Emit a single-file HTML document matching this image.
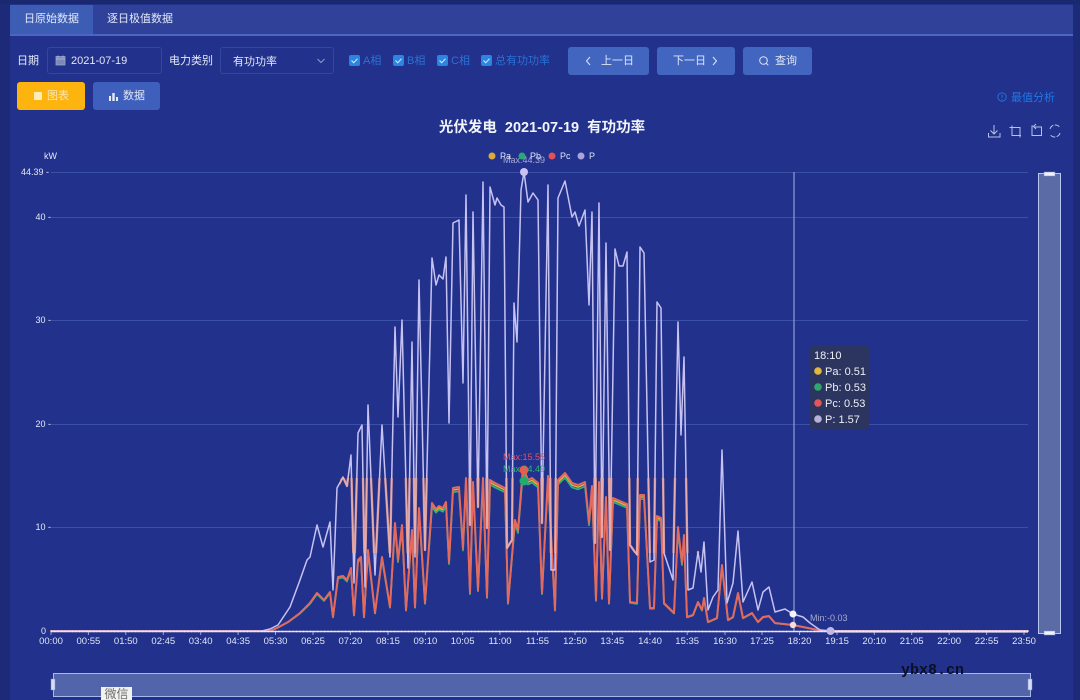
<!DOCTYPE html>
<html lang="zh">
<head>
<meta charset="utf-8">
<title>光伏发电</title>
<style>
html,body{margin:0;padding:0;background:#22318b}
body{width:1080px;height:700px;overflow:hidden;position:relative;font-family:"Liberation Sans","Noto Sans CJK SC",sans-serif;color:#e6ebf8;font-size:11px}
#w{position:absolute;left:0;top:0;width:1080px;height:700px;overflow:hidden;background:#22318b;filter:blur(.35px)}
.abs{position:absolute}
.t{position:absolute;white-space:nowrap;line-height:14px}
.btn{position:absolute;border-radius:3px;background:#4266bf;box-sizing:border-box;height:28px;top:47px;line-height:29px;text-align:center;color:#dfe6f6;font-size:11px}
.box{position:absolute;top:47px;height:27px;box-sizing:border-box;border:1px solid #34479f;border-radius:3px}
.cb{position:absolute;top:55px;width:11px;height:11px;background:#2a86e2;border-radius:2px}
.cb svg{display:block}
.cl{position:absolute;top:54px;color:#2b72d6;font-size:11px;line-height:14px;white-space:nowrap}
</style>
</head>
<body>
<div id="w">
<div class="abs" style="left:0;top:0;width:10px;height:700px;background:#1c2a78"></div>
<div class="abs" style="left:1073px;top:0;width:7px;height:700px;background:#1c2a78"></div>
<div class="abs" style="left:0;top:0;width:1080px;height:4px;background:#1a2870"></div>

<div class="abs" style="left:10px;top:5px;width:1063px;height:29px;background:#2f4198"></div>
<div class="abs" style="left:10px;top:5px;width:83px;height:29px;background:#3d5db5"></div>
<div class="abs" style="left:10px;top:34px;width:1063px;height:2px;background:#4a65c2"></div>
<div class="t" style="left:24px;top:12px;color:#e2e8f8">日原始数据</div>
<div class="t" style="left:107px;top:12px;color:#e2e8f8">逐日极值数据</div>

<div class="t" style="left:17px;top:54px">日期</div>
<div class="box" style="left:47px;width:115px"></div>
<svg class="abs" style="left:55px;top:55px" width="11" height="11" viewBox="0 0 11 11"><rect x="1" y="1.500" width="9" height="8.500" fill="#7c88b8" stroke="#98a4cc" stroke-width=".8"/><path d="M1 4h9M3 .5v2M8 .5v2" stroke="#b4bedc" stroke-width=".8"/></svg>
<div class="t" style="left:71px;top:54px;color:#e2e8f8">2021-07-19</div>
<div class="t" style="left:169px;top:54px">电力类别</div>
<div class="box" style="left:220px;width:114px"></div>
<div class="t" style="left:233px;top:55px;color:#e2e8f8">有功功率</div>
<svg class="abs" style="left:316px;top:57px" width="10" height="8" viewBox="0 0 10 8"><path d="M1.500 2l3.500 3.500L8.500 2" fill="none" stroke="#8e9ccc" stroke-width="1"/></svg>

<div class="cb" style="left:349px"><svg width="11" height="11"><path d="M2.500 5.500l2.200 2.200 3.800-4" fill="none" stroke="#cfe4fb" stroke-width="1.100"/></svg></div><div class="cl" style="left:363px">A相</div>
<div class="cb" style="left:393px"><svg width="11" height="11"><path d="M2.500 5.500l2.200 2.200 3.800-4" fill="none" stroke="#cfe4fb" stroke-width="1.100"/></svg></div><div class="cl" style="left:407px">B相</div>
<div class="cb" style="left:437px"><svg width="11" height="11"><path d="M2.500 5.500l2.200 2.200 3.800-4" fill="none" stroke="#cfe4fb" stroke-width="1.100"/></svg></div><div class="cl" style="left:451px">C相</div>
<div class="cb" style="left:481px"><svg width="11" height="11"><path d="M2.500 5.500l2.200 2.200 3.800-4" fill="none" stroke="#cfe4fb" stroke-width="1.100"/></svg></div><div class="cl" style="left:495px">总有功功率</div>

<div class="btn" style="left:568px;width:81px">
<svg style="position:absolute;left:17px;top:9px" width="7" height="10" viewBox="0 0 7 10"><path d="M5 1L1.500 5 5 9" fill="none" stroke="#dfe6f6" stroke-width="1"/></svg><span style="position:absolute;left:33px;top:0">上一日</span></div>
<div class="btn" style="left:657px;width:78px"><span style="position:absolute;left:16px;top:0">下一日</span>
<svg style="position:absolute;left:54px;top:9px" width="7" height="10" viewBox="0 0 7 10"><path d="M2 1l3.500 4L2 9" fill="none" stroke="#dfe6f6" stroke-width="1"/></svg></div>
<div class="btn" style="left:743px;width:69px">
<svg style="position:absolute;left:15px;top:8px" width="12" height="12" viewBox="0 0 12 12"><circle cx="5.500" cy="5.500" r="3.800" fill="none" stroke="#dfe6f6" stroke-width="1"/><path d="M8.300 8.300l2 2" stroke="#dfe6f6" stroke-width="1"/></svg><span style="position:absolute;left:32px;top:0">查询</span></div>

<div class="btn" style="left:17px;top:82px;width:68px;background:#fdb40f;color:#fbe6a8"><span class="abs" style="left:17px;top:10px;width:8px;height:8px;background:#fdeeb8;border-radius:1px"></span><span style="position:absolute;left:30px;top:0">图表</span></div>
<div class="btn" style="left:93px;top:82px;width:67px;background:#3f5fbc">
<svg style="position:absolute;left:16px;top:10px" width="9" height="9" viewBox="0 0 9 9"><path d="M0 4h2v5H0zM3.300 1h2.400v8H3.300zM7 5h2v4H7z" fill="#e6ebf8"/></svg><span style="position:absolute;left:30px;top:0">数据</span></div>

<svg class="abs" style="left:997px;top:92px" width="10" height="10" viewBox="0 0 10 10"><circle cx="5" cy="5" r="4.200" fill="none" stroke="#1f78e6" stroke-width=".9"/><path d="M5 2.500v3.500M5 7v1" stroke="#1f78e6" stroke-width=".9"/></svg>
<div class="t" style="left:1011px;top:91px;color:#1f78e6">最值分析</div>

<div class="t" style="left:0;width:1084px;top:120px;text-align:center;font-size:14.500px;font-weight:bold;color:#f2f4fb;line-height:16px;white-space:pre">光伏发电  2021-07-19  有功功率</div>

<svg class="abs" style="left:0;top:0" width="1080" height="700" viewBox="0 0 1080 700">
  <defs>
    <polyline id="rl" fill="none" stroke-linejoin="round" stroke-linecap="round" points="51,631 270,631 277,628 288,622 300,613 310,603 317,593 324,600 330,592 333,617 338,577 343,576 347,580 351,568 354,615 358,560 361,557 364,617 368,550 375,613 382,557 390,607 395,523 398,560 402,525 406,610 412,530 415,607 419,508 425,603 432,503 436,509 439,506 443,508 446,502 449,562 453,488 459,487 463,548 466,478 470,593 473,482 478,590 483,478 487,597 490,480 495,483 505,488 508,603 515,520 518,530 523,467 528,480 532,478 538,483 542,593 548,476 555,610 558,480 565,473 572,483 578,485 585,482 589,522 592,486 596,600 599,482 602,598 606,497 609,603 613,498 620,501 627,504 630,602 637,603 640,495 644,495 650,608 654,608 657,516 661,518 664,603 674,613 678,527 682,563 684,535 687,617 693,615 698,602 702,610 704,598 708,622 717,618 722,565 728,620 733,617 738,593 743,618 752,613 758,622 763,617 769,616 775,623 793,625 803,627 818,630 830,631 1028,631"/>
    <polyline id="pl" fill="none" stroke-linejoin="round" stroke-linecap="round" points="51,631 262,631 270,629 278,625 290,607 300,580 307,560 310,557 317,525 323,547 330,522 333,590 337,488 343,477 347,486 351,455 354,583 358,433 362,425 365,587 368,405 375,575 382,425 390,557 395,327 398,417 402,320 408,568 412,342 415,557 419,280 425,550 432,258 436,285 439,275 443,279 446,257 449,423 453,223 459,220 463,383 466,195 470,525 473,212 478,507 483,182 487,528 490,187 495,205 497,198 501,205 504,207 507,548 512,540 514,303 517,342 521,190 524,172 528,202 533,193 538,200 542,523 548,185 551,570 555,570 558,198 565,181 572,217 575,212 579,226 585,210 589,305 592,212 595,543 599,203 602,537 606,243 610,550 615,249 619,266 623,266 627,252 630,545 637,555 640,247 644,253 650,562 654,560 657,302 661,308 664,553 673,580 678,322 681,435 684,357 688,590 693,588 698,552 701,572 704,542 708,610 713,597 718,590 722,450 727,603 733,583 738,531 743,602 752,582 758,610 763,592 769,587 775,612 785,609 793,614 803,617 810,623 820,630 830,631 1028,631"/>
    <clipPath id="lo"><rect x="340" y="478" width="360" height="75"/></clipPath>
  </defs>
  <!-- toolbox -->
  <g fill="none" stroke="#b7c2e4" stroke-width="1">
    <path d="M994 125v9M990.500 130.500l3.500 3.500 3.500-3.500M988.500 133v4h11.500v-4"/>
    <path d="M1012 125.500v10h9M1009.500 127.500h10.500v10"/>
    <path d="M1033 126h-1v9.500h9.500v-8.500h-7M1036 124l-2.500 2.500 2.500 2.500"/>
    <path d="M1050 129a5.500 5.500 0 0 1 9.500-2M1060 133a5.500 5.500 0 0 1-9.500 2" stroke-dasharray="5 1.500"/>
  </g>

  <!-- grid -->
  <g stroke="#3a4fa6" stroke-width="1">
    <path d="M51 172.500H1028M51 217.500H1028M51 320.500H1028M51 424.500H1028M51 527.500H1028"/>
  </g>
  <path d="M51 631.500H1028" stroke="#6f84d0" stroke-width="1"/>

  <!-- y axis -->
  <g font-family="Liberation Sans, sans-serif" font-size="9" fill="#e4e9f8">
    <text x="44" y="159">kW</text>
    <text x="49" y="175" text-anchor="end">44.39 -</text>
    <text x="51" y="220" text-anchor="end">40 -</text>
    <text x="51" y="323" text-anchor="end">30 -</text>
    <text x="51" y="427" text-anchor="end">20 -</text>
    <text x="51" y="530" text-anchor="end">10 -</text>
    <text x="46" y="634" text-anchor="end">0</text>
  </g>

  <!-- x axis labels -->
  <g font-family="Liberation Sans, sans-serif" font-size="9.500" fill="#dfe5f6" text-anchor="middle">
    <text x="51" y="644">00:00</text><text x="88.400" y="644">00:55</text><text x="125.800" y="644">01:50</text><text x="163.300" y="644">02:45</text><text x="200.700" y="644">03:40</text><text x="238.100" y="644">04:35</text><text x="275.500" y="644">05:30</text><text x="313" y="644">06:25</text><text x="350.400" y="644">07:20</text><text x="388" y="644">08:15</text><text x="425.400" y="644">09:10</text><text x="462.600" y="644">10:05</text><text x="500" y="644">11:00</text><text x="537.500" y="644">11:55</text><text x="575" y="644">12:50</text><text x="612.300" y="644">13:45</text><text x="650" y="644">14:40</text><text x="687.200" y="644">15:35</text><text x="725" y="644">16:30</text><text x="762" y="644">17:25</text><text x="799.500" y="644">18:20</text><text x="837" y="644">19:15</text><text x="874.300" y="644">20:10</text><text x="911.700" y="644">21:05</text><text x="949.200" y="644">22:00</text><text x="986.600" y="644">22:55</text><text x="1024" y="644">23:50</text>
  </g>
  <path d="M51 631v4M88.400 631v4M125.800 631v4M163.300 631v4M200.700 631v4M238.100 631v4M275.500 631v4M313 631v4M350.400 631v4M388 631v4M425.400 631v4M462.600 631v4M500 631v4M537.500 631v4M575 631v4M612.300 631v4M650 631v4M687.200 631v4M725 631v4M762 631v4M799.500 631v4M837 631v4M874.300 631v4M911.700 631v4M949.200 631v4M986.600 631v4M1024 631v4" stroke="#c8d2f0" stroke-width="1" opacity=".7"/>

  <!-- cursor -->
  <path d="M794 172V631" stroke="#8e9fd8" stroke-width="1.200"/>

  <!-- series -->
  <use href="#rl" stroke="#e2b23c" stroke-width="1.500" transform="translate(0,631) scale(1,.985) translate(0,-631)"/>
  <use href="#rl" stroke="#2fb27a" stroke-width="1.800" transform="translate(0,631) scale(1,.97) translate(0,-631)"/>
  <use href="#rl" stroke="#e4695e" stroke-width="2"/>
  <use href="#pl" stroke="#c6c2f3" stroke-width="1.500"/>
  <use href="#pl" stroke="#f2a596" stroke-width="2.400" opacity=".75" clip-path="url(#lo)"/>
  <path d="M51 631.500H830" stroke="#e6dcf0" stroke-width="1.600"/>
  <path d="M830 631.500H1028" stroke="#e6dcf0" stroke-width="2.200"/>
  <path d="M51 631.500H1028" stroke="#ffffff" stroke-width="1.500" stroke-dasharray="1 2.500" opacity=".6"/>

  <!-- markers -->
  <circle cx="524" cy="172" r="4" fill="#c9c3f2"/>
  <circle cx="524" cy="470" r="4.500" fill="#ee5a4c"/>
  <circle cx="524" cy="481" r="4.500" fill="#23ad6c"/>
  <circle cx="830.500" cy="631" r="4" fill="#c0b8e8"/>
  <circle cx="793" cy="614" r="3.500" fill="#f5f4fd"/>
  <circle cx="793" cy="625" r="3.200" fill="#f8dcd8"/>

  <g font-family="Liberation Sans, sans-serif" font-size="9">
    <text x="524" y="163" text-anchor="middle" fill="#a8a8d8">Max:44.39</text>
    <text x="524" y="460" text-anchor="middle" fill="#d8566a">Max:15.55</text>
    <text x="524" y="472" text-anchor="middle" fill="#32b27c">Max:14.49</text>
    <text x="810" y="621" fill="#a8aad4">Min:-0.03</text>
  </g>

  <!-- legend -->
  <circle cx="492" cy="156" r="3.500" fill="#d9ab3a"/>
  <circle cx="522" cy="156" r="3.500" fill="#2aa878"/>
  <circle cx="552" cy="156" r="3.500" fill="#e2505a"/>
  <circle cx="581" cy="156" r="3.500" fill="#a9a3de"/>
  <g font-family="Liberation Sans, sans-serif" font-size="9" fill="#dfe5f6">
    <text x="500" y="159">Pa</text><text x="530" y="159">Pb</text><text x="560" y="159">Pc</text><text x="589" y="159">P</text>
  </g>

  <!-- right slider -->
  <rect x="1038.500" y="173.500" width="22" height="460" fill="#5a6ba6" stroke="#b9c8f2" stroke-width="1"/>
  <rect x="1044" y="172" width="11" height="4" fill="#f0f3fb" stroke="#7e8fc4" stroke-width=".5"/>
  <rect x="1044" y="631" width="11" height="4" fill="#f0f3fb" stroke="#7e8fc4" stroke-width=".5"/>

  <!-- bottom slider -->
  <rect x="53.500" y="673.500" width="977" height="23" fill="#5265aa" stroke="#a8b8ea" stroke-width="1"/>
  <rect x="51" y="679" width="4" height="11" fill="#d8dff5" stroke="#7e8fc4" stroke-width=".5"/>
  <rect x="1028" y="679" width="4" height="11" fill="#d8dff5" stroke="#7e8fc4" stroke-width=".5"/>

  <!-- tooltip -->
  <rect x="810" y="345" width="59" height="84" rx="3" fill="#2c355f"/>
  <circle cx="818" cy="371" r="3.800" fill="#e3b63c"/>
  <circle cx="818" cy="387" r="3.800" fill="#2ea96e"/>
  <circle cx="818" cy="403" r="3.800" fill="#e2555a"/>
  <circle cx="818" cy="419" r="3.800" fill="#b9b0d8"/>
  <g font-family="Liberation Sans, sans-serif" font-size="11" fill="#eef0f6">
    <text x="814" y="359">18:10</text>
    <text x="825" y="375">Pa: 0.51</text>
    <text x="825" y="391">Pb: 0.53</text>
    <text x="825" y="407">Pc: 0.53</text>
    <text x="825" y="423">P: 1.57</text>
  </g>
</svg>

<!-- watermark tag -->
<div class="abs" style="left:101px;top:687px;width:31px;height:13px;background:#f2f2ee;overflow:hidden;text-align:center;font-size:12px;line-height:15px;color:#6e6e6e">微信</div>
<div class="t" style="left:901px;top:663px;font-family:'Liberation Mono',monospace;font-size:15px;font-weight:bold;line-height:16px;color:#0a0f24">ybx8.cn</div>
</div>
</body>
</html>
